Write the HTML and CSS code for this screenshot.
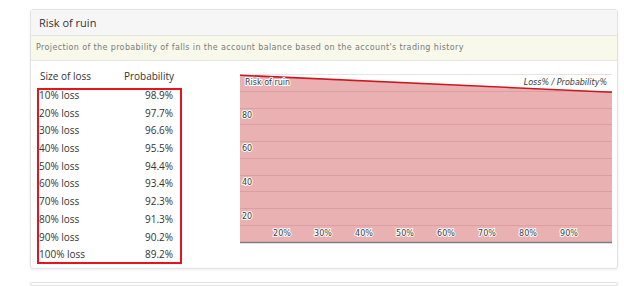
FILE: index.html
```html
<!DOCTYPE html>
<html lang="en">
<head>
    <meta charset="UTF-8">
    <title>Risk of ruin</title>
    <link rel="stylesheet" href="styles.css">
</head>
<body>
    <div class="panel">
        <div class="panel-head">Risk of ruin</div>
        <div class="panel-desc">Projection of the probability of falls in the account balance based on the account's trading history</div>
        <div class="panel-body">
            <div class="ruin-table">
                <div class="ruin-head">
                    <span>Size of loss</span>
                    <span>Probability</span>
                </div>
                <div class="ruin-rows">
                    <div class="ruin-row"><span>10% loss</span><span>98.9%</span></div>
                    <div class="ruin-row"><span>20% loss</span><span>97.7%</span></div>
                    <div class="ruin-row"><span>30% loss</span><span>96.6%</span></div>
                    <div class="ruin-row"><span>40% loss</span><span>95.5%</span></div>
                    <div class="ruin-row"><span>50% loss</span><span>94.4%</span></div>
                    <div class="ruin-row"><span>60% loss</span><span>93.4%</span></div>
                    <div class="ruin-row"><span>70% loss</span><span>92.3%</span></div>
                    <div class="ruin-row"><span>80% loss</span><span>91.3%</span></div>
                    <div class="ruin-row"><span>90% loss</span><span>90.2%</span></div>
                    <div class="ruin-row"><span>100% loss</span><span>89.2%</span></div>
                </div>
            </div>
            <svg class="ruin-chart" width="372" height="170" viewBox="0 0 372 170">
                <line x1="0" y1="0.5" x2="372" y2="0.5" stroke="#e4e4e4" stroke-width="1"/>
                <polygon points="0,1.5 372,18.6 372,168 0,168" fill="#e9b1b1"/>
                <g stroke="#dc9e9e" stroke-width="1">
                    <line x1="0" y1="17.5" x2="372" y2="17.5"/>
                    <line x1="0" y1="34.5" x2="372" y2="34.5"/>
                    <line x1="0" y1="50.5" x2="372" y2="50.5"/>
                    <line x1="0" y1="67.5" x2="372" y2="67.5"/>
                    <line x1="0" y1="84.5" x2="372" y2="84.5"/>
                    <line x1="0" y1="101.5" x2="372" y2="101.5"/>
                    <line x1="0" y1="117.5" x2="372" y2="117.5"/>
                    <line x1="0" y1="134.5" x2="372" y2="134.5"/>
                    <line x1="0" y1="151.5" x2="372" y2="151.5"/>
                </g>
                <line x1="0" y1="1.2" x2="372" y2="18.2" stroke="#cf1520" stroke-width="1.6"/>
                <line x1="0" y1="168.5" x2="372" y2="168.5" stroke="#7d7d7d" stroke-width="1.5"/>
                <g class="chart-text">
                    <text x="5" y="11">Risk of ruin</text>
                    <text x="367" y="11" text-anchor="end" font-style="italic">Loss% / Probability%</text>
                    <text x="2" y="44">80</text>
                    <text x="2" y="77">60</text>
                    <text x="2" y="111">40</text>
                    <text x="2" y="145">20</text>
                    <g text-anchor="middle">
                        <text x="42" y="162">20%</text>
                        <text x="83" y="162">30%</text>
                        <text x="124" y="162">40%</text>
                        <text x="165" y="162">50%</text>
                        <text x="206" y="162">60%</text>
                        <text x="247" y="162">70%</text>
                        <text x="288" y="162">80%</text>
                        <text x="329" y="162">90%</text>
                    </g>
                </g>
            </svg>
        </div>
    </div>
    <div class="panel panel-next"></div>
</body>
</html>
```

FILE: styles.css
```css
*{
    margin: 0;
    padding: 0;
    box-sizing: border-box;
}
html,body{
    height: 100%;
    overflow: hidden;
}
body{
    background: #fff;
    padding: 9px 6px 0 30px;
    font-family: "Open Sans", "Liberation Sans", sans-serif;
    color: #333;
}
.panel{
    border: 1px solid #e2e2e2;
    border-radius: 3px;
    box-shadow: 0 1px 3px rgba(0,0,0,0.07);
    background: #fff;
}
.panel-head{
    height: 26px;
    line-height: 25px;
    padding-left: 8px;
    background: #f6f6f6;
    border-bottom: 1px solid #e4e4e4;
    font-size: 11px;
    color: #333;
}
.panel-desc{
    height: 25px;
    line-height: 24px;
    padding-left: 5px;
    background: #f8f9eb;
    border-bottom: 1px solid #e4e4e4;
    font-family: "DejaVu Sans", sans-serif;
    font-size: 8px;
    letter-spacing: 0.37px;
    color: #7a7a7a;
}
.panel-body{
    display: flex;
    align-items: flex-start;
    height: 207px;
    padding: 8px 0 0 6px;
}
.ruin-table{
    width: 145px;
    font-size: 10px;
}
.ruin-head{
    display: flex;
    justify-content: space-between;
    height: 19px;
    line-height: 15px;
    padding: 0 8px 0 3px;
}
.ruin-rows{
    display: flex;
    flex-direction: column;
    gap: 7.7px;
    border: 2px solid #e8141c;
    padding: 0 7px 3px 0;
}
.ruin-row{
    display: flex;
    justify-content: space-between;
    line-height: 10px;
}
.ruin-chart{
    display: block;
    margin: 5px 0 0 58px;
}
.chart-text text{
    font-family: "DejaVu Sans", sans-serif;
    font-size: 8px;
    fill: #3a3a3a;
    stroke: #fff;
    stroke-width: 2px;
    paint-order: stroke;
    stroke-linejoin: round;
}
.panel-next{
    margin-top: 13px;
    height: 4px;
}
```
